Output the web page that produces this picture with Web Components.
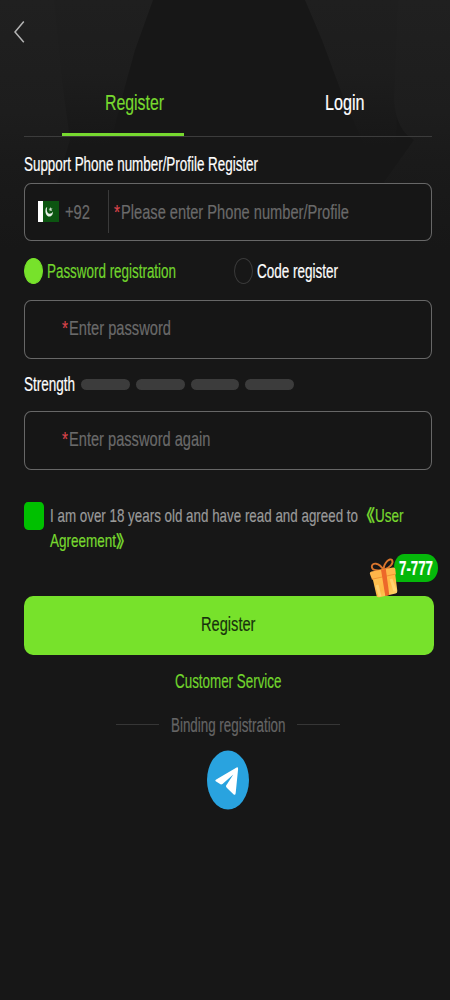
<!DOCTYPE html>
<html lang="en">
<head>
<meta charset="utf-8">
<title>Register</title>
<style>
html,body{margin:0;background:#171717}
body{font-family:"Liberation Sans","Noto Sans CJK SC",sans-serif;color:#fff}
</style>
</head>
<body>
<register-page></register-page>
<script>
const define = (name, html, setup) => {
  const t = document.createElement('template');
  t.innerHTML = html;
  customElements.define(name, class extends HTMLElement {
    constructor() {
      super();
      this.attachShadow({mode: 'open'}).appendChild(t.content.cloneNode(true));
    }
    connectedCallback() { if (setup) setup.call(this, this.shadowRoot); }
  });
};

// A line of condensed text, fitted to the width in its "w" attribute.
define('fit-text', `<style>
:host{display:block;flex:none;height:26px;line-height:26px}
span{display:inline-block;white-space:pre;transform-origin:0 50%;-webkit-text-stroke:.2px currentColor}
</style><span><slot></slot></span>`, function (root) {
  const w = +this.getAttribute('w');
  this.style.width = w + 'px';
  this.style.fontSize = (this.getAttribute('size') || 20) + 'px';
  const s = root.querySelector('span');
  s.style.transform = `scaleX(${w / s.getBoundingClientRect().width})`;
});

define('page-backdrop', `<style>
:host{position:absolute;inset:0;z-index:0}svg{display:block}
</style><svg width="450" height="1000">
<defs>
<linearGradient id="in" gradientUnits="userSpaceOnUse" x1="0" y1="0" x2="0" y2="145"><stop offset="0" stop-color="#1f1f1f"/><stop offset=".5" stop-color="#1d1d1d"/><stop offset="1" stop-color="#171717"/></linearGradient>
<linearGradient id="out" gradientUnits="userSpaceOnUse" x1="0" y1="0" x2="0" y2="250"><stop offset="0" stop-color="#202020"/><stop offset=".45" stop-color="#1d1d1d"/><stop offset=".65" stop-color="#1a1a1a"/><stop offset="1" stop-color="#171717"/></linearGradient>
</defs>
<path d="M50 0H153L135 50L124 90L110 145H60Z" fill="url(#in)"/>
<path d="M400 0H305L322 40L342 94L364 145H396Z" fill="url(#in)"/>
<path d="M0 0H54L62 80L70 140L55 190L10 260H0Z" fill="url(#out)"/>
<path d="M450 0H398L394 100Q396 130 414 140L384 182L425 260H450Z" fill="url(#out)"/>
</svg>`);

define('back-bar', `<style>
:host{display:flex;align-items:center;height:63px;padding-left:13px}
svg{position:relative;top:0}
</style><svg width="13" height="24" viewBox="0 0 13 24"><path d="M10.8 1.5 2 12l8.8 10.2" fill="none" stroke="#b4b4b4" stroke-width="1.5"/></svg>`);

define('tab-item', `<style>
:host{display:flex;flex-direction:column;align-items:center;justify-content:space-between;color:#fff;height:46px;width:122px}
i{display:block;width:122px;height:3px}
:host([active]){color:#77d92f}
:host([active]) i{background:#77d92f}
:host([active]) ::slotted(*){margin-left:22px}
</style><slot></slot><i></i>`);

define('tab-bar', `<style>
:host{display:flex;box-sizing:border-box;justify-content:space-between;height:74px;margin:0 24px 0;padding:27px 26px 0 38px;width:408px;background:linear-gradient(#3c3c3c,#3c3c3c) 0 72.500px/100% 1.5px no-repeat}
</style><slot></slot>`);

define('input-box', `<style>
:host{display:flex;align-items:center;box-sizing:border-box;width:408px;border:solid #676767;border-width:1.8px 1.4px;border-radius:7px/8px;background:#161616;color:#6a6a6a}
</style><slot></slot>`);

define('required-mark', `<style>
:host{display:block;color:#d8434b;margin-right:1px}
</style><fit-text w="6" size="20">*</fit-text>`);

define('pk-flag', `<style>:host{display:block}svg{display:block}</style>
<svg width="21" height="21" viewBox="0 0 21 21"><path fill="#fff" d="M0 0h5v21H0z"/><path fill="#0c5511" d="M5 0h16v21H5z"/><path d="M8 6.7C6.4 11 8.3 15.5 11.4 15.6 14 15.6 15 13 14.9 10.6 13.7 13 11 13.5 9.7 11.8 8.7 10.4 8.6 8.4 9.2 6.3Z" fill="#e9f2e9"/><path d="m12.5 6 .6 1.5 1.5-.3-1.1 1.4.7 1.5-1.5-.7-1.1 1.1.1-1.8-1.2-.8 1.5-.3Z" fill="#c9dfc9"/></svg>`);

define('radio-option', `<style>
:host{display:flex;align-items:center;gap:4px;color:#fff}
i{box-sizing:border-box;width:19px;height:26px;border-radius:50%;border:1.4px solid #3a3a3a}
:host([checked]){color:#71d52d}
:host([checked]) i{background:#77e22b;border-color:#77e22b}
</style><i></i><slot></slot>`);

define('strength-meter', `<style>
:host{display:flex;align-items:center;height:26px}
div{display:flex;gap:6px;margin:1px 0 0 6px}
i{width:48.8px;height:11px;border-radius:5.5px;background:#3c3c3c}
</style><slot></slot><div><i></i><i></i><i></i><i></i></div>`);

define('agree-row', `<style>
:host{display:flex;gap:6px;color:#9a9a9a}
i{width:20px;height:28.500px;border-radius:4px/5px;background:#00c000;flex:none}
.r{display:flex;height:25.3px;align-items:center}
.g{color:#77d92f}
.q{font-weight:bold;padding-top:3px}
.t{margin-top:1.7px}
</style><i></i><div class="t"><div class="r"><fit-text w="308" size="19">I am over 18 years old and have read and agreed to</fit-text><fit-text class="g q" w="17" size="17">《</fit-text><fit-text class="g" w="28.500" size="19">User</fit-text></div>
<div class="r g"><fit-text w="66" size="19">Agreement</fit-text><fit-text class="q" w="16" size="17">》</fit-text></div></div>`);

define('gift-badge', `<style>
:host{position:absolute;right:-4px;top:-42px;display:flex}
.p{display:flex;align-items:center;box-sizing:border-box;width:43.5px;height:28px;padding-left:4.500px;border-radius:10px 12px 12px 4px/14px 14px 14px 4px;background:#05b70a;color:#fff;font-weight:bold;margin-left:-5px}
svg{position:relative;top:3px;z-index:1}
</style><svg width="30" height="41" viewBox="0 0 30 41">
<defs><linearGradient id="a" x1="0" y1="0" x2="1" y2="1"><stop offset="0" stop-color="#ffc65a"/><stop offset=".55" stop-color="#ffb843"/><stop offset="1" stop-color="#ffdb70"/></linearGradient></defs>
<path d="M14.500 13C10 5 3 5.500 2.800 9.500 3 13 6 14 14.500 13M14.500 13C15 5 21 .8 23 3 25 6 21 11 14.500 13" fill="none" stroke="#d9752d" stroke-width="1.900"/>
<path d="M3.300 20 26 15.500 28.300 34Q28.500 36 26.500 36.500L10.500 40.300Q8 40.700 7.500 38.500Z" fill="url(#a)"/>
<path d="M.8 16.500Q.7 15 2.500 14.500L24 10.500Q26 10.200 26.300 12L26.800 17 2.900 22.300Z" fill="#ffb64a"/>
<path d="M2.900 22.300 26.800 17" stroke="#f29433" stroke-width="1"/>
<path d="m12 12.800 4.800-.9 3.500 26-4 1Z" fill="#ed682a"/>
<path d="M8 28 11 39.300M22 22l4 12" stroke="#ffe187" stroke-width="3" opacity=".6"/>
</svg><div class="p"><fit-text w="34" size="19.500">7-777</fit-text></div>`);

define('submit-button', `<style>
:host{position:relative;display:flex;justify-content:center;box-sizing:border-box;padding:15px 1.500px 0 0;width:409.500px;height:59px;border-radius:9px/10px;background:#77e22b;color:#17310d}
</style><slot></slot>`);

define('line-divider', `<style>
:host{display:flex;align-items:center;justify-content:center;gap:12px;color:#656565;height:26px}
i{width:43px;height:1.500px;background:#363636}
</style><i></i><slot></slot><i></i>`);

define('telegram-button', `<style>
:host{display:block}svg{display:block}
</style><svg width="42" height="60" viewBox="0 0 42 60"><ellipse cx="21" cy="30" rx="21" ry="29.600" fill="#29a3df"/>
<path d="M8.700 31.200Q7.600 30.300 9.200 29.500L29.600 17.500Q31.300 16.800 31.100 19L28.700 43Q28.300 45.800 26.700 44.400L20.500 38.400C18.500 37 18.700 35.800 20 34.300L26.300 24.500 15.500 34Q14 35 12.700 33.700Z" fill="#fff"/></svg>`);

define('register-page', `<style>
:host{display:block;position:relative;width:450px;height:1000px;overflow:hidden;background:#171717}
main{position:relative;z-index:1}
form{display:flex;flex-direction:column;padding-left:24px}
.code{display:flex;align-items:center;gap:6.500px;box-sizing:border-box;width:83.500px;height:43px;padding-left:12.500px;border-right:1.300px solid #3a3a3a}
.radios{display:flex;height:26px}
.foot{display:flex;flex-direction:column;align-items:center;width:408px}
</style>
<page-backdrop></page-backdrop>
<main>
<back-bar></back-bar>
<tab-bar><tab-item active><fit-text w="59" size="21.5">Register</fit-text></tab-item><tab-item><fit-text w="39.500" size="21.500">Login</fit-text></tab-item></tab-bar>
<form>
<fit-text style="margin-top:14px" w="234" size="19.500">Support Phone number/Profile Register</fit-text>
<input-box style="margin-top:6px;height:58px;padding-bottom:1px"><div class="code"><pk-flag></pk-flag><fit-text w="25" size="21">+92</fit-text></div><required-mark style="margin-left:5.500px"></required-mark><fit-text w="228" size="21">Please enter Phone number/Profile</fit-text></input-box>
<div class="radios" style="margin-top:17px"><radio-option checked><fit-text w="129" size="19.500">Password registration</fit-text></radio-option><radio-option style="margin-left:58px"><fit-text w="81" size="19.500">Code register</fit-text></radio-option></div>
<input-box style="margin-top:16px;height:59px;padding:0 0 3px 36.500px"><required-mark></required-mark><fit-text w="102" size="21">Enter password</fit-text></input-box>
<strength-meter style="margin-top:11.500px"><fit-text w="51" size="19.500">Strength</fit-text></strength-meter>
<input-box style="margin-top:14px;height:59px;padding:0 0 3px 36.500px"><required-mark></required-mark><fit-text w="141.500" size="21">Enter password again</fit-text></input-box>
<agree-row style="margin-top:32px;height:94.200px"></agree-row>
<submit-button><fit-text w="54.500" size="20.500">Register</fit-text><gift-badge></gift-badge></submit-button>
<div class="foot">
<fit-text style="margin-top:13px;color:#71d52d" w="106.500" size="19.500">Customer Service</fit-text>
<line-divider style="margin-top:18px"><fit-text w="114.500" size="20">Binding registration</fit-text></line-divider>
<telegram-button style="margin-top:12.700px"></telegram-button>
</div>
</form>
</main>`);
</script>
</body>
</html>
